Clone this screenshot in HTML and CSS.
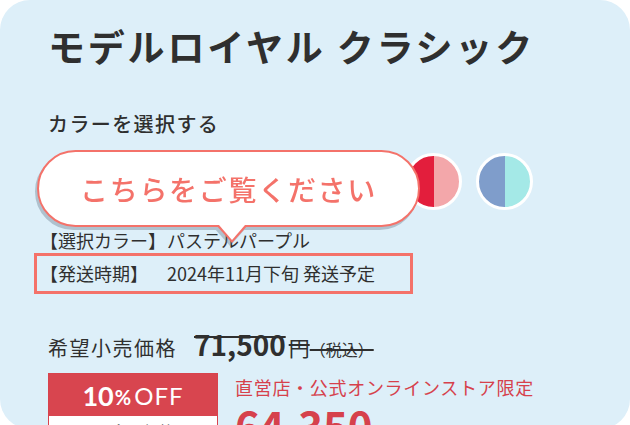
FILE: index.html
```html
<!DOCTYPE html>
<html lang="ja">
<head>
<meta charset="utf-8">
<title>モデルロイヤル クラシック</title>
<link rel="stylesheet" href="styles.css">
</head>
<body>
<div class="card">
  <h1 class="title">モデルロイヤル クラシック</h1>
  <p class="color-label">カラーを選択する</p>
  <div class="swatches">
    <span class="swatch s1"></span>
    <span class="swatch s2"></span>
    <span class="swatch s3"></span>
    <span class="swatch s4"></span>
    <span class="swatch s5"></span>
    <span class="swatch s6"></span>
    <span class="swatch s7"></span>
  </div>
  <div class="spec">
    <div class="spec-row">
      <span class="spec-key">【選択カラー】</span>
      <span class="spec-val">パステルパープル</span>
    </div>
    <div class="spec-row spec-row--hl">
      <span class="spec-key">【発送時期】</span>
      <span class="spec-val">2024年11月下旬 発送予定</span>
    </div>
  </div>
  <div class="price">
    <span class="price-label">希望小売価格</span>
    <s class="price-old"><span class="price-num">71,500</span><span class="price-yen">円</span><span class="price-tax">（税込）</span></s>
  </div>
  <div class="offer">
    <div class="offer-badge">
      <div class="offer-off"><span class="off-num">10</span><span class="off-pct">%</span><span class="off-txt">OFF</span></div>
      <div class="offer-note">■ 会員価格</div>
    </div>
    <div class="offer-body">
      <p class="offer-lead">直営店・公式オンラインストア限定</p>
      <p class="offer-price"><span class="offer-num">64,350</span><span class="offer-yen">円（税込）</span></p>
    </div>
  </div>
  <div class="bubble">
    <span class="bubble-text">こちらをご覧ください</span>
  </div>
</div>
</body>
</html>
```

FILE: styles.css
```css
* { box-sizing: border-box; }
html, body { margin: 0; padding: 0; background: #ffffff; }
body {
  font-family: "Noto Sans CJK JP", "Noto Sans", sans-serif;
  color: #2f2f2f;
}
.card {
  position: relative;
  width: 630px;
  height: 429px;
  overflow: hidden;
  background: #ddeff9;
  border-radius: 30px;
  padding: 24px 48px 0 48px;
}
.title {
  margin: 0;
  font-size: 37px;
  line-height: 44px;
  font-weight: 700;
  letter-spacing: 2.8px;
  color: #2f2f2f;
}
.color-label {
  margin: 42px 0 0;
  font-size: 20px;
  line-height: 28px;
  font-weight: 500;
  letter-spacing: 1.4px;
}
.swatches {
  margin: 15px 0 0 2px;
  display: flex;
  gap: 14px;
}
.swatch {
  width: 57px;
  height: 57px;
  border-radius: 50%;
  border: 3px solid #ffffff;
  flex: none;
}
.s1 { background: linear-gradient(90deg, #c9a6d8 50%, #e7d6ef 50%); }
.s2 { background: linear-gradient(90deg, #2f3f7a 50%, #93a6d6 50%); }
.s3 { background: linear-gradient(90deg, #1f1f1f 50%, #8a8a8a 50%); }
.s4 { background: linear-gradient(90deg, #3b7a4d 50%, #a7d6b0 50%); }
.s5 { background: linear-gradient(90deg, #e6a13a 50%, #f6d99b 50%); }
.s6 { background: linear-gradient(90deg, #e31e3c 50%, #f3a7aa 50%); }
.s7 { background: linear-gradient(90deg, #7f9dcb 50%, #a4e9e7 50%); }

.spec {
  margin: 17px 0 0 -14px;
  width: 379px;
}
.spec-row {
  display: grid;
  grid-template-columns: 127px auto;
  font-size: 18px;
  line-height: 26px;
  padding: 0 3px;
  border: 3px solid transparent;
  border-top: 0;
  border-bottom: 0;
}
.spec-row--hl {
  border: 3px solid #f4726a;
  line-height: 35px;
}
.spec-key, .spec-val { white-space: nowrap; }

.price {
  margin-top: 33px;
  display: flex;
  align-items: baseline;
  line-height: 34px;
  white-space: nowrap;
}
.price-label {
  font-size: 20px;
  letter-spacing: 1.5px;
  margin-right: 17px;
}
.price-old {
  text-decoration: line-through;
  text-decoration-thickness: 1.5px;
  color: #2f2f2f;
}
.price-num {
  font-size: 28px;
  font-weight: 700;
}
.price-yen { font-size: 21px; margin-left: 3px; }
.price-tax { font-size: 16px; }

.offer {
  margin-top: 7px;
  display: flex;
  gap: 17px;
}
.offer-badge {
  width: 170px;
  flex: none;
  border: 1px solid #d8434d;
}
.offer-off {
  background: #d8454f;
  color: #ffffff;
  height: 42px;
  display: flex;
  align-items: center;
  justify-content: center;
  font-family: "Lato", "Noto Sans", sans-serif;
}
.off-num { font-size: 27px; font-weight: 700; }
.off-pct { font-size: 20px; font-weight: 700; margin: 4px 3px 0 1px; }
.off-txt { font-size: 24px; font-weight: 400; letter-spacing: 1px; }
.offer-note {
  background: #ffffff;
  color: #555;
  font-size: 16px;
  line-height: 30px;
  text-align: center;
}
.offer-body { padding-top: 1px; }
.offer-lead {
  margin: 0;
  color: #d6414c;
  font-size: 18px;
  line-height: 26px;
  letter-spacing: 0.7px;
  white-space: nowrap;
}
.offer-price {
  margin: 0;
  color: #d6414c;
  white-space: nowrap;
  line-height: 50px;
}
.offer-num { font-size: 42px; font-weight: 700; }
.offer-yen { font-size: 18px; margin-left: 4px; }

.bubble {
  position: absolute;
  left: 37px;
  top: 150px;
  width: 383px;
  height: 77px;
  background: #ffffff;
  border: 2px solid #f4726a;
  border-radius: 40px;
  display: flex;
  align-items: center;
  justify-content: center;
  filter: drop-shadow(-2px 3px 0 rgba(90, 110, 125, 0.35));
}
.bubble::after {
  content: "";
  position: absolute;
  left: 180px;
  bottom: -15px;
  width: 26px;
  height: 15px;
  background: #ffffff;
  clip-path: polygon(0 0, 100% 0, 50% 100%);
}
.bubble::before {
  content: "";
  position: absolute;
  left: 177px;
  bottom: -18px;
  width: 32px;
  height: 18px;
  background: #f4726a;
  clip-path: polygon(0 0, 100% 0, 50% 100%);
}
.bubble-text {
  color: #f4726a;
  font-size: 28px;
  font-weight: 500;
  letter-spacing: 1.7px;
  position: relative;
  z-index: 1;
}
```
